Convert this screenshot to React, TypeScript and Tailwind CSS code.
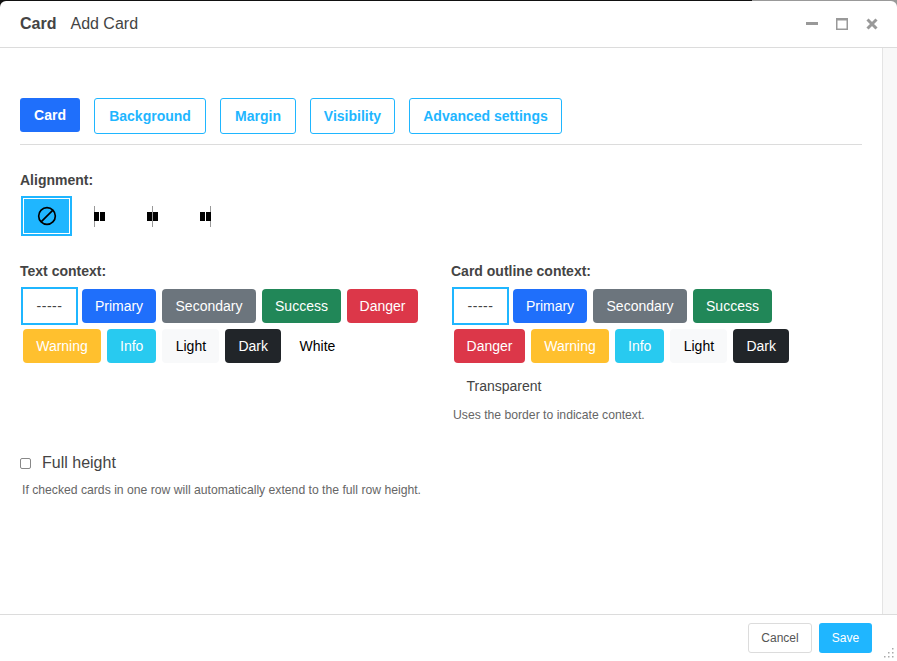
import React from 'react';

const font = { fontFamily: '"Liberation Sans", Arial, sans-serif' };

const tabs = [
  { label: 'Background', width: 'w-[112px]' },
  { label: 'Margin', width: 'w-[76px]' },
  { label: 'Visibility', width: 'w-[85px]' },
  { label: 'Advanced settings', width: 'w-[153px]' },
];

const swatches: Record<string, string> = {
  Primary: 'w-[74px] bg-[#1f6ffb] text-white',
  Secondary: 'w-[94px] bg-[#6c757d] text-white',
  Success: 'w-[79px] bg-[#218758] text-white',
  Danger: 'w-[71px] bg-[#dc3749] text-white',
  Warning: 'w-[78px] bg-[#ffc02e] text-white',
  Info: 'w-[49.4px] bg-[#28caf0] text-white',
  Light: 'w-[57px] bg-[#f8f9fa] text-black',
  Dark: 'w-[55.6px] bg-[#212529] text-white',
  White: 'w-[61px] bg-white text-black',
  Transparent: 'w-[100px] bg-transparent text-[#444]',
};

const ContextButton = ({ name }: { name: string }) => (
  <button className={`h-[34px] rounded text-center text-[14px] leading-[34px] ${swatches[name]}`}>{name}</button>
);

const EmptyOption = () => (
  <button className="h-[34px] w-[53px] bg-white text-center text-[14px] leading-[32px] tracking-[0.5px] text-[#444] outline-2 outline-[#1fb6ff]">
    -----
  </button>
);

const BanIcon = () => (
  <svg width="20" height="20" viewBox="0 0 24 24" fill="none" stroke="#000" strokeWidth="2">
    <circle cx="12" cy="12" r="10" />
    <path d="M19.07 4.93 4.93 19.07" />
  </svg>
);

const AlignIcon = ({ line }: { line: number }) => (
  <svg width="21" height="22" viewBox="0 0 21 22">
    <rect x={line} y="1" width="1" height="21" fill="#999" />
    <rect x="5" y="7" width="5" height="9" fill="#000" />
    <rect x="11" y="7" width="5" height="9" fill="#000" />
  </svg>
);

const WindowButtons = () => (
  <div className="flex items-center gap-[18px] pr-[19px]">
    <svg width="12" height="12" viewBox="0 0 12 12">
      <rect x="0" y="4" width="12" height="3" fill="#999" />
    </svg>
    <svg width="12" height="12" viewBox="0 0 12 12" fill="none">
      <rect x="0.75" y="1.25" width="10.5" height="10" stroke="#999" strokeWidth="1.5" />
      <rect x="0" y="0" width="12" height="2.5" fill="#999" />
    </svg>
    <svg width="12" height="12" viewBox="0 0 12 12">
      <path d="M1.5 1.5 10.5 10.5M10.5 1.5 1.5 10.5" stroke="#999" strokeWidth="3" />
    </svg>
  </div>
);

const ResizeGrip = () => (
  <svg className="absolute right-[2px] bottom-[2px]" width="12" height="12" viewBox="0 0 12 12" fill="#aaa">
    <rect x="9" y="1" width="1.5" height="1.5" />
    <rect x="5" y="5" width="1.5" height="1.5" />
    <rect x="9" y="5" width="1.5" height="1.5" />
    <rect x="1" y="9" width="1.5" height="1.5" />
    <rect x="5" y="9" width="1.5" height="1.5" />
    <rect x="9" y="9" width="1.5" height="1.5" />
  </svg>
);

export default function App() {
  return (
    <div className="h-[661px] w-[897px] overflow-hidden bg-[linear-gradient(90deg,#111_752px,#999_752px)]" style={font}>
      <div className="relative mt-px flex h-[660px] flex-col rounded-t-[6px] bg-white text-[#444]">
        <header className="flex h-[47px] shrink-0 items-center justify-between border-b border-[#dcdcdc] pb-px">
          <div className="flex items-center gap-[14px] pl-5 text-[16px]">
            <span className="font-bold">Card</span>
            <span>Add Card</span>
          </div>
          <WindowButtons />
        </header>

        <div className="flex min-h-0 flex-1">
          <main className="min-w-0 flex-1 pt-[50px] pr-5 pl-5">
            <div className="flex items-start gap-[14px] border-b border-[#dcdcdc] pb-[10px]">
              <button className="h-[34px] w-[60px] rounded-[3px] bg-[#1f6ffb] text-[14px] font-bold text-white">Card</button>
              {tabs.map((t) => (
                <button
                  key={t.label}
                  className={`h-9 rounded-[3px] border border-[#1fb6ff] text-[14px] font-bold text-[#1fb6ff] ${t.width}`}
                >
                  {t.label}
                </button>
              ))}
            </div>

            <div className="mt-[27px] text-[14px] leading-4 font-bold">Alignment:</div>
            <div className="mt-[10px] flex items-center gap-[6px] pl-[3px]">
              <div className="flex h-9 w-[47px] items-center justify-center">
                <div className="flex h-[34px] w-[45px] items-center justify-center bg-[#1fb6ff] outline-2 outline-offset-1 outline-[#1fb6ff]">
                  <BanIcon />
                </div>
              </div>
              <div className="flex h-9 w-[47px] items-center justify-center"><AlignIcon line={5} /></div>
              <div className="flex h-9 w-[47px] items-center justify-center"><AlignIcon line={10} /></div>
              <div className="flex h-9 w-[47px] items-center justify-center"><AlignIcon line={15} /></div>
            </div>

            <div className="mt-[29px] grid grid-cols-2 gap-5">
              <div>
                <div className="text-[14px] leading-4 font-bold">Text context:</div>
                <div className="mt-[10px] flex flex-wrap gap-[6px] pl-[3px]">
                  <EmptyOption />
                  {['Primary', 'Secondary', 'Success', 'Danger', 'Warning', 'Info', 'Light', 'Dark', 'White'].map((n) => (
                    <ContextButton key={n} name={n} />
                  ))}
                </div>
              </div>
              <div>
                <div className="text-[14px] leading-4 font-bold">Card outline context:</div>
                <div className="mt-[10px] flex max-w-[390px] flex-wrap gap-[6px] pl-[3px]">
                  <EmptyOption />
                  {['Primary', 'Secondary', 'Success', 'Danger', 'Warning', 'Info', 'Light', 'Dark', 'Transparent'].map((n) => (
                    <ContextButton key={n} name={n} />
                  ))}
                </div>
                <p className="mt-[4px] pl-[2px] text-[12.2px] leading-4 text-[#666]">Uses the border to indicate context.</p>
              </div>
            </div>

            <label className="mt-[30px] flex items-center gap-[11px] text-[16px] leading-5">
              <input type="checkbox" className="h-[11px] w-[11px] appearance-none rounded-[2px] border border-[#888] bg-white" />
              Full height
            </label>
            <p className="mt-[9px] pl-[2px] text-[12.2px] leading-4 text-[#666]">
              If checked cards in one row will automatically extend to the full row height.
            </p>
          </main>
          <div className="w-[15px] shrink-0 border-l border-[#e4e4e4] bg-[#f8f8f8]" />
        </div>

        <footer className="relative flex h-[47px] shrink-0 items-start justify-end gap-[7px] border-t border-[#dcdcdc] pt-2 pr-[25px]">
          <button className="h-[30px] w-[64px] rounded-[3px] border border-[#dcdcdc] bg-white text-[12px] text-[#555]">Cancel</button>
          <button className="h-[30px] w-[53px] rounded-[3px] bg-[#1fb6ff] text-[12px] text-white">Save</button>
          <ResizeGrip />
        </footer>
      </div>
    </div>
  );
}
